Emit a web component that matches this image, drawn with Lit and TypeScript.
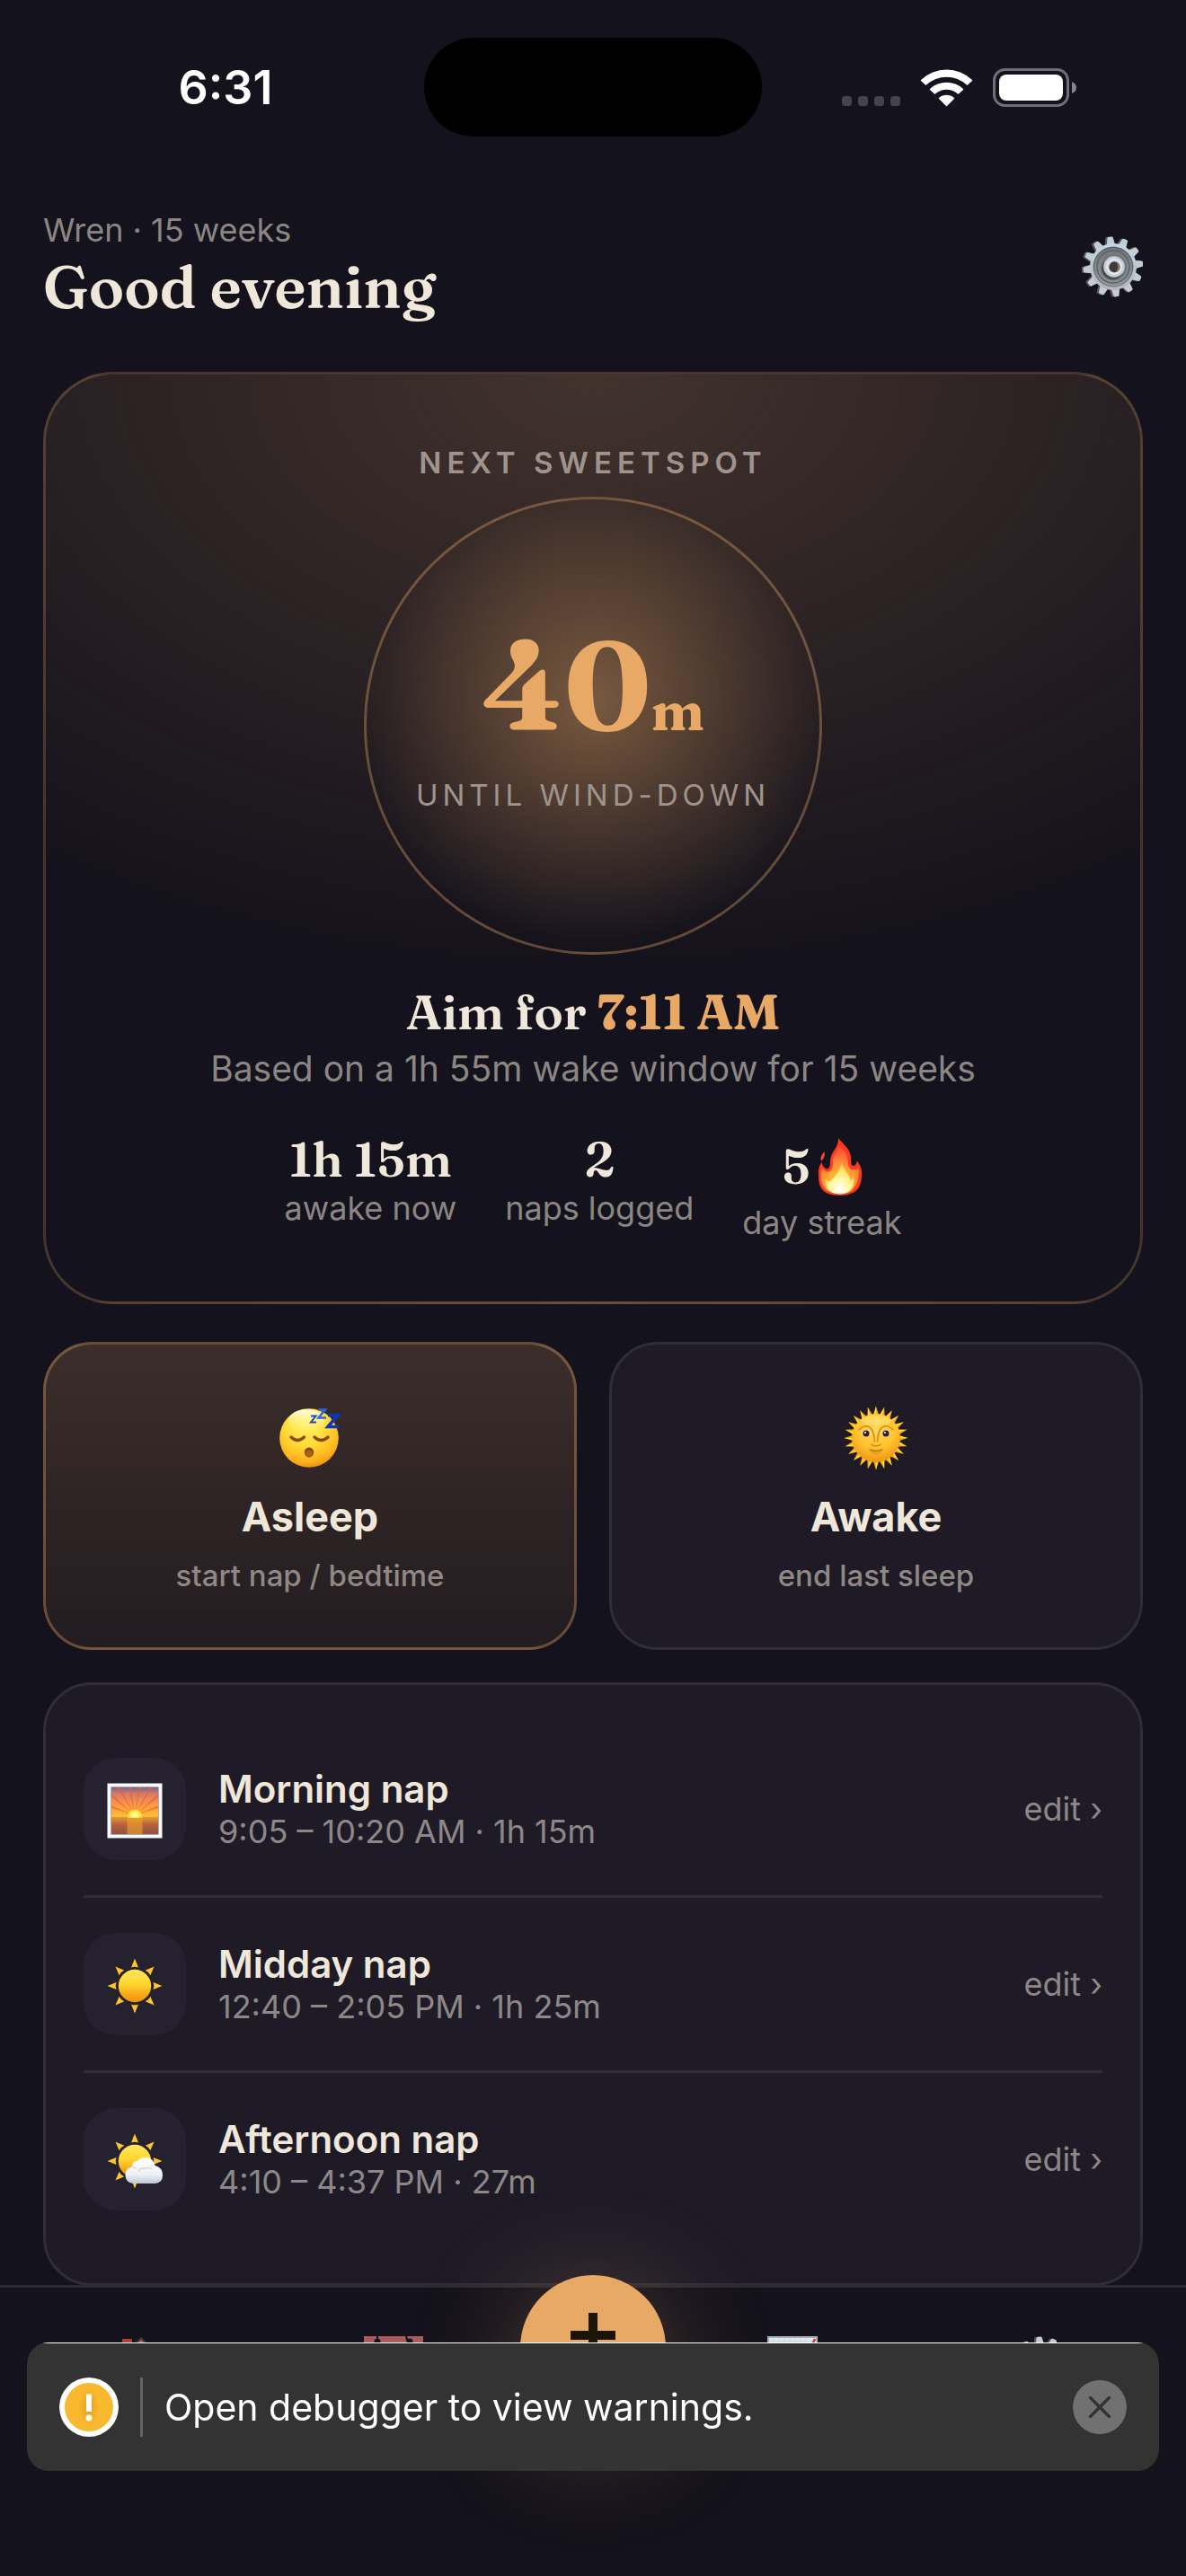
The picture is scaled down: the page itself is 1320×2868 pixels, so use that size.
import { LitElement, html, css, svg } from "lit";
import { customElement } from "lit/decorators.js";

const turns = (count: number, offset = 0) =>
  Array.from({ length: count }, (_, i) => offset + (i * 360) / count);

const gear = () => html`
  <svg class="gear" viewBox="0 0 68 68" aria-hidden="true">
    <defs>
      <linearGradient id="steel" x1="0" y1="0" x2="0" y2="1">
        <stop offset="0" stop-color="#c6d8e4" />
        <stop offset="0.55" stop-color="#bcc3cc" />
        <stop offset="1" stop-color="#b9b3bd" />
      </linearGradient>
      <linearGradient id="dish" x1="0" y1="0" x2="0" y2="1">
        <stop offset="0" stop-color="#6f777d" />
        <stop offset="1" stop-color="#8f979c" />
      </linearGradient>
    </defs>
    <g fill="#5d5650">
      ${turns(12, -6).map(
        (a) => svg`<path d="M27.5 14 L29.5 1.5 Q30 0.5 31 0.5 L35 0.5 Q36 0.5 36.5 1.5 L38.5 14 Z" transform="rotate(${a} 33 34)" />`
      )}
    </g>
    <g fill="#c2ccd6">
      ${turns(12, -6).map(
        (a) => svg`<path d="M29.5 14 L31.8 1.8 Q32.2 0.6 33.2 0.6 L36.8 0.6 Q37.8 0.6 38.2 1.8 L40.5 14 Z" transform="rotate(${a} 35 34)" />`
      )}
    </g>
    <circle cx="35" cy="34" r="26" fill="url(#steel)" />
    <circle cx="35" cy="34" r="22.4" fill="#59636a" />
    <circle cx="35" cy="34.4" r="21.4" fill="url(#dish)" />
    <circle cx="35" cy="34" r="18" fill="none" stroke="#5b6368" stroke-width="1.4" />
    <circle cx="35.4" cy="34.6" r="14.6" fill="#70777c" />
    <circle cx="34.4" cy="36" r="12.4" fill="#4f4c4c" />
    <circle cx="36" cy="34" r="11.8" fill="#c8ced6" />
    <circle cx="36" cy="34" r="8" fill="none" stroke="#e3e7ec" stroke-width="2" />
    <circle cx="36.4" cy="34.2" r="6" fill="#3d3a3c" />
    <path d="M38 28.4 A6 6 0 0 1 38 40 A9 9 0 0 0 38 28.4Z" fill="#8a7462" />
  </svg>
`;

const flame = html`
  <svg class="flame" viewBox="0 0 50 64" aria-hidden="true">
    <defs>
      <radialGradient id="fire" cx="0.5" cy="0.86" r="0.82">
        <stop offset="0" stop-color="#ffe14a" />
        <stop offset="0.42" stop-color="#ffac35" />
        <stop offset="0.72" stop-color="#ff7b38" />
        <stop offset="1" stop-color="#fb4a2e" />
      </radialGradient>
      <radialGradient id="core" cx="0.5" cy="0.85" r="0.8">
        <stop offset="0" stop-color="#ffffff" />
        <stop offset="0.4" stop-color="#fff9a8" />
        <stop offset="1" stop-color="#ffd23c" />
      </radialGradient>
    </defs>
    <path d="M23 0 C27 6 36 11 37 21 C37.4 26 37 30 39 31 C42 31 43.5 29 44 25.5 C48 31 50 37 49 43 C48.5 48 48.5 48 46 55 C42 61 34 64 25 64 C14 64 7 61 3.5 55 C1.5 51 1 47 1 42 C0.5 36 1.5 31 4.500 27 C5.500 31 7 33 10 34.500 C13 34.500 14 31 14 26 C14 15 24 11 23 0Z" fill="#fa3a22" />
    <path d="M23 9 C31 14 33 19 33.500 25 C34 31 35 35 40 35.500 C43 35.500 44 34 45 32 C47 40 45 49 41.500 54 C38 60 33 62 25 62 C16 62 9 59 6 53 C3 47 3 39 5 33.500 C8 37 10 38 12.500 37.500 C16.500 36 17 31 17 26 C17 19 23 16 23 9Z" fill="url(#fire)" />
    <path d="M27 27 C28 35 35 39 36 46 C37 48 39 46 40 44 C41 52 38 62 25 62.500 C12 62 8 54 9 46 C11 48 12 49 14 48 C19 44 24 38 27 27Z" fill="url(#core)" />
    <path d="M7.500 15 C5 18 2.500 21 4 25.500 C6.500 24 8.500 20 7.500 15Z" fill="#fb4630" />
  </svg>
`;

const asleepFace = html`
  <svg class="face" viewBox="0 0 72 72" aria-hidden="true">
    <defs>
      <radialGradient id="skin" cx="0.45" cy="0.25" r="0.78">
        <stop offset="0" stop-color="#fff36a" />
        <stop offset="0.5" stop-color="#ffd935" />
        <stop offset="0.84" stop-color="#feb01c" />
        <stop offset="1" stop-color="#e88a0c" />
      </radialGradient>
      <linearGradient id="shine" x1="0" y1="0" x2="0" y2="1">
        <stop offset="0" stop-color="#fffef0" stop-opacity="0.95" />
        <stop offset="1" stop-color="#fff36a" stop-opacity="0" />
      </linearGradient>
    </defs>
    <circle cx="35" cy="36" r="32.800" fill="url(#skin)" />
    <ellipse cx="32" cy="17" rx="20" ry="13" fill="url(#shine)" />
    <g fill="none" stroke="#8a4a06" stroke-width="3.400" stroke-linecap="round">
      <path d="M15 35 Q22 42 29.500 35" />
      <path d="M41 35 Q48.500 42 56 35" />
    </g>
    <ellipse cx="35" cy="52" rx="5.200" ry="5.400" fill="#7f4304" />
    <ellipse cx="35" cy="53" rx="3.600" ry="3.600" fill="#a8650c" />
    <g fill="none" stroke-linejoin="miter">
      <path d="M37 11.500 H42.500 L37 18.500 H43" stroke="#1d46cc" stroke-width="2" />
      <path d="M45.500 4.500 H53 L45.500 13.500 H54" stroke="#3567dd" stroke-width="2.600" />
      <path d="M56 10.500 H67 L56 23.500 H68" stroke="#0f34c0" stroke-width="3.600" />
    </g>
  </svg>
`;

const sunFace = html`
  <svg class="face" viewBox="0 0 72 72" aria-hidden="true">
    <defs>
      <radialGradient id="disc" cx="0.5" cy="0.3" r="0.7">
        <stop offset="0" stop-color="#ffd85a" />
        <stop offset="0.6" stop-color="#ffc32e" />
        <stop offset="1" stop-color="#ef9412" />
      </radialGradient>
    </defs>
    ${turns(24).map(
      (a) => svg`
        <path d="M32.400 12 L36 0.500 L39.600 12Z" fill="#f6a722" transform="rotate(${a} 36 36)" />
        <path d="M36 0.500 L36 12 L33.400 12Z" fill="#ffe838" transform="rotate(${a} 36 36)" />`
    )}
    <circle cx="36" cy="36" r="27" fill="url(#disc)" />
    <ellipse cx="36" cy="16.500" rx="17" ry="5" fill="#ffe486" opacity="0.5" />
    <g fill="none" stroke="#d48a12" stroke-width="1.500" stroke-linecap="round">
      <path d="M17 27 Q25 19 31 26 Q34 31 34.500 40" />
      <path d="M55 27 Q47 19 41 26 Q38 31 37.500 40" />
      <path d="M31 43 Q33 45.500 36 44.500 Q39 45.500 41 43" />
    </g>
    <ellipse cx="25" cy="31" rx="5" ry="3.800" fill="#f6dfc0" />
    <ellipse cx="47" cy="31" rx="5" ry="3.800" fill="#f6dfc0" />
    <circle cx="25" cy="31" r="3.600" fill="#34202c" />
    <circle cx="47" cy="31" r="3.600" fill="#34202c" />
    <circle cx="24" cy="30" r="1" fill="#ffffff" />
    <circle cx="46" cy="30" r="1" fill="#ffffff" />
    <path d="M27.500 47.500 Q36 51 44.500 47.500 Q41 55 36 55 Q31 55 27.500 47.500Z" fill="#e8a020" />
    <path d="M29 49 Q36 51.500 43 49" fill="none" stroke="#c67c10" stroke-width="1.400" />
  </svg>
`;

const sunrise = html`
  <svg class="weather" viewBox="0 0 62 62" aria-hidden="true">
    <defs>
      <linearGradient id="dawn" x1="0" y1="0" x2="0" y2="1">
        <stop offset="0" stop-color="#76668f" />
        <stop offset="0.22" stop-color="#d97a66" />
        <stop offset="0.6" stop-color="#fd9a42" />
        <stop offset="1" stop-color="#fdbb33" />
      </linearGradient>
      <linearGradient id="sea" x1="0" y1="0" x2="0" y2="1">
        <stop offset="0" stop-color="#e59a2d" />
        <stop offset="0.4" stop-color="#b9653e" />
        <stop offset="1" stop-color="#94503f" />
      </linearGradient>
      <clipPath id="sky"><rect x="5" y="5" width="52" height="33" /></clipPath>
    </defs>
    <rect x="0.500" y="0.500" width="61" height="61" fill="#f6fafa" />
    <rect x="4.500" y="4.500" width="53" height="53" fill="#6d5a78" />
    <rect x="5" y="5" width="52" height="33" fill="url(#dawn)" />
    <g clip-path="url(#sky)" fill="#e7603f" opacity="0.7">
      ${turns(18, 10).map((a) => svg`<path d="M31 36 L29.200 -12 L32.800 -12Z" transform="rotate(${a} 31 36)" />`)}
    </g>
    <path d="M5 35 Q14 32 20 35 L42 35 Q48 32 57 35 V40 H5Z" fill="#fdbb33" />
    <rect x="5" y="38" width="52" height="19" fill="url(#sea)" />
    <rect x="22.500" y="38" width="17" height="19" fill="#f0a52c" opacity="0.6" />
    <path d="M22.500 38.500 A8.500 9 0 0 1 39.500 38.500Z" fill="#ffe53d" />
    <path d="M26 38.500 A5 6 0 0 1 36 38.500Z" fill="#fff993" />
  </svg>
`;

const sunShape = () => svg`
  <defs>
    <linearGradient id="sunfill" x1="0" y1="0" x2="0" y2="1">
      <stop offset="0" stop-color="#ffe65c" />
      <stop offset="0.45" stop-color="#ffd630" />
      <stop offset="0.8" stop-color="#f5a315" />
      <stop offset="1" stop-color="#ee9411" />
    </linearGradient>
  </defs>
  ${turns(8).map(
    (a) => svg`<path d="M27 10.500 L31 0.500 L35 10.500 Q31 8.800 27 10.500Z" fill="#ffc52d" transform="rotate(${a} 31 31)" />`
  )}
  <circle cx="31" cy="31" r="18.200" fill="url(#sunfill)" />
`;

const sun = html`<svg class="weather" viewBox="0 0 62 62" aria-hidden="true">${sunShape()}</svg>`;

const sunCloud = html`
  <svg class="weather" viewBox="0 0 62 62" aria-hidden="true">
    ${sunShape()}
    <defs>
      <linearGradient id="cloud" x1="0" y1="0" x2="0" y2="1">
        <stop offset="0" stop-color="#ffffff" />
        <stop offset="0.65" stop-color="#eef1f5" />
        <stop offset="1" stop-color="#bccad6" />
      </linearGradient>
    </defs>
    <path d="M29 56 Q20.500 55 20.500 46.500 Q20.500 38.500 28 37.500 Q28 31 34 31 Q37 27 43 27 Q52 27.500 53.500 36 Q62 38 62 47 Q62 55 54 56Z" fill="url(#cloud)" />
    <path d="M28 37.500 Q31 37.500 33 40 M35 43 Q37 38.500 42 39.500 Q46 37 50 40" fill="none" stroke="#d3d9e0" stroke-width="1.400" />
  </svg>
`;

const house = html`
  <svg class="tab-icon" viewBox="0 0 66 66" aria-hidden="true">
    <rect x="8" y="3" width="11" height="24" fill="#b83d31" />
    <path d="M29 1 L0 30 H59Z" fill="#3a3f3e" />
    <path d="M29 4 L4 29 V62 H54 V29Z" fill="#d9573f" />
  </svg>
`;

const calendar = html`
  <svg class="tab-icon dimmed" viewBox="0 0 66 66" aria-hidden="true">
    <rect x="0" y="0" width="66" height="64" fill="#e6e9ec" />
    <path d="M0 0 H66 V18 H0Z" fill="#e57777" />
    <circle cx="15" cy="6" r="3.500" fill="#14121c" />
    <circle cx="51" cy="6" r="3.500" fill="#14121c" />
    <path d="M14 0 H16 V5 H14Z M46 0 H48 L50 5 H47Z" fill="#14121c" />
  </svg>
`;

const chart = html`
  <svg class="tab-icon" viewBox="0 0 66 66" aria-hidden="true">
    <rect x="5" y="0" width="56" height="60" fill="#a9afb5" />
    <rect x="7" y="2" width="52" height="56" fill="#e2e8ee" />
    <path d="M7 5.500 H59 M7 12 H59 M12 2 V58 M18 2 V58 M24 2 V58 M30 2 V58 M36 2 V58 M42 2 V58 M48 2 V58" stroke="#c2d9ea" stroke-width="1" />
    <path d="M8 52 L30 34 L40 40 L58 3" fill="none" stroke="#cf3543" stroke-width="2.500" />
  </svg>
`;

const naps = [
  { icon: sunrise, name: "Morning nap", detail: "9:05 – 10:20 AM · 1h 15m" },
  { icon: sun, name: "Midday nap", detail: "12:40 – 2:05 PM · 1h 25m" },
  { icon: sunCloud, name: "Afternoon nap", detail: "4:10 – 4:37 PM · 27m" },
];

@customElement("app-root")
export class AppRoot extends LitElement {
  static styles = css`
    :host {
      --bg: #14121c;
      --card: #1e1b27;
      --line: #302d39;
      --cream: #f0e7db;
      --muted: #8b8683;
      --amber: #e8a866;
      --serif: Fraunces, "Liberation Serif", serif;
      display: block;
      min-height: 100vh;
      background: var(--bg);
      color: var(--cream);
      font-family: Inter, "Liberation Sans", sans-serif;
      font-size: 36px;
      line-height: 44px;
    }
    * { box-sizing: border-box; }
    h1, h2, p, ul { margin: 0; padding: 0; }
    button {
      margin: 0;
      padding: 0;
      border: 0;
      background: none;
      color: inherit;
      font: inherit;
    }
    svg { display: block; flex: none; }

    .status {
      display: grid;
      grid-template-columns: 1fr 376px 1fr;
      align-items: center;
      padding-top: 42px;
      color: #ffffff;
    }
    .time {
      padding: 2px 0 0 30px;
      text-align: center;
      font-size: 52px;
      font-weight: 600;
    }
    .island { height: 110px; border-radius: 55px; background: #000000; }
    .radios { display: flex; justify-content: center; padding: 2px 32px 0 0; }
    .radios svg { width: 262px; height: 44px; }

    .page {
      display: flex;
      flex-direction: column;
      padding: 82px 48px 324px;
    }
    .header {
      display: flex;
      align-items: center;
      justify-content: space-between;
      margin-bottom: 54px;
    }
    .baby { color: var(--muted); }
    .greeting {
      font: 600 66px/82px var(--serif);
    }
    .gear { width: 68px; height: 68px; }

    .hero {
      display: flex;
      flex-direction: column;
      align-items: center;
      padding: 78px 42px 66px;
      border: 3px solid rgba(232, 168, 102, 0.24);
      border-radius: 78px;
      background-image: radial-gradient(ellipse 88% 66% at 50% 0%, rgba(232, 168, 102, 0.22), rgba(232, 168, 102, 0));
    }
    .eyebrow {
      color: #9f948d;
      font-size: 33px;
      font-weight: 600;
      line-height: 40px;
      letter-spacing: 6px;
    }
    .dial {
      display: flex;
      flex-direction: column;
      align-items: center;
      justify-content: center;
      width: 510px;
      height: 510px;
      margin-top: 18px;
      border: 3px solid rgba(232, 168, 102, 0.36);
      border-radius: 50%;
      background-image: radial-gradient(circle at 50% 45%, rgba(232, 168, 102, 0.42), rgba(20, 18, 28, 0.25) 72%);
    }
    .count {
      color: var(--amber);
      font: 700 138px/104px var(--serif);
    }
    .unit { font-size: 60px; }
    .until {
      margin-top: 22px;
      color: #9f948d;
      font-size: 33px;
      line-height: 40px;
      letter-spacing: 5px;
    }
    .aim {
      margin-top: 32px;
      font: 600 54px/64px var(--serif);
    }
    .aim-time { color: var(--amber); font-weight: 700; }
    .basis {
      margin-top: 7px;
      color: var(--muted);
      font-size: 39px;
      line-height: 48px;
    }
    .stats { display: flex; gap: 54px; margin-top: 45px; }
    .stat { display: flex; flex-direction: column; align-items: center; color: var(--muted); }
    .value {
      display: flex;
      align-items: center;
      gap: 8px;
      color: var(--cream);
      font: 600 54px/64px var(--serif);
    }
    .streak { line-height: 80px; }
    .flame { width: 50px; height: 64px; }

    .actions {
      display: grid;
      grid-template-columns: 1fr 1fr;
      gap: 36px;
      margin-top: 42px;
    }
    .action {
      display: flex;
      flex-direction: column;
      align-items: center;
      gap: 18px;
      padding: 60px 24px;
      border: 3px solid var(--line);
      border-radius: 54px;
      background-color: var(--card);
    }
    .action.active {
      border-color: rgba(232, 168, 102, 0.34);
      background-color: transparent;
      background-image: linear-gradient(rgba(232, 168, 102, 0.19), rgba(232, 168, 102, 0.07));
    }
    .art { display: flex; align-items: center; height: 87px; }
    .face { width: 72px; height: 72px; }
    .action-name { font-size: 45px; font-weight: 700; line-height: 54px; }
    .action-hint { color: #8f8884; font-size: 33px; font-weight: 500; line-height: 40px; }

    .naps {
      margin-top: 36px;
      padding: 42px;
      border: 3px solid var(--line);
      border-radius: 54px;
      background: var(--card);
      list-style: none;
    }
    .nap {
      display: flex;
      align-items: center;
      gap: 36px;
      padding: 39px 0;
    }
    .nap + .nap { border-top: 3px solid var(--line); }
    .tile {
      display: flex;
      align-items: center;
      justify-content: center;
      width: 114px;
      height: 114px;
      border-radius: 36px;
      background: #25212e;
    }
    .weather { width: 62px; height: 62px; margin-top: 4px; }
    .nap-text { flex: 1; }
    .nap-name { font-size: 42px; font-weight: 600; line-height: 50px; }
    .nap-detail, .edit { color: #8d8887; }

    .tabs {
      position: fixed;
      right: 0;
      bottom: 0;
      left: 0;
      display: grid;
      grid-template-columns: 32fr 23fr 21fr 23fr 32fr;
      justify-items: center;
      align-items: start;
      height: 324px;
      border-top: 3px solid #2b292e;
      background: var(--bg);
    }
    .tab { padding-top: 54px; }
    .tab-icon { width: 66px; height: 66px; }
    .dimmed { opacity: 0.72; }
    .add {
      display: flex;
      justify-content: center;
      width: 162px;
      height: 162px;
      margin-top: -14px;
      padding-top: 42px;
      border-radius: 50%;
      background: var(--amber);
      box-shadow: 0 24px 120px rgba(232, 168, 102, 0.36);
    }
    .plus { width: 50px; height: 50px; }

    .toast {
      position: fixed;
      right: 30px;
      bottom: 117px;
      left: 30px;
      display: flex;
      align-items: center;
      gap: 24px;
      height: 143px;
      padding: 0 36px;
      border-radius: 24px;
      background: #333333 linear-gradient(#ffffff, #ffffff) top / 100% 1px no-repeat;
      color: #ffffff;
    }
    .warn { width: 66px; height: 66px; }
    .rule { width: 3px; height: 66px; background: #666666; }
    .message { flex: 1; font-size: 41px; line-height: 50px; }
    .dismiss svg { width: 60px; height: 60px; }
  `;

  render() {
    return html`
      <div class="status">
        <div class="time">6:31</div>
        <div class="island"></div>
        <div class="radios">
          <svg viewBox="0 0 262 44" aria-hidden="true">
            <g fill="#45434d">
              <rect x="0" y="31" width="11" height="11" rx="3.500" />
              <rect x="18" y="31" width="11" height="11" rx="3.500" />
              <rect x="36" y="31" width="11" height="11" rx="3.500" />
              <rect x="54" y="31" width="11" height="11" rx="3.500" />
            </g>
            <g fill="#ffffff">
              <path d="M88 13 A41 41 0 0 1 145 13 Q145.500 13.500 145 14 L140 18.500 Q139.500 19 139 18.500 A33 33 0 0 0 94 18.500 Q93.500 19 93 18.500 L88 14 Q87.500 13.500 88 13Z" />
              <path d="M98 23 A27 27 0 0 1 135 23 Q135.500 23.500 135 24 L130 28.500 Q129.500 29 129 28.500 A18.500 18.500 0 0 0 104 28.500 Q103.500 29 103 28.500 L98 24 Q97.500 23.500 98 23Z" />
              <path d="M108 33 A13 13 0 0 1 125 33 Q125.500 33.500 125 34 L117 42 Q116.500 42.500 116 42 L108 34 Q107.500 33.500 108 33Z" />
            </g>
            <rect x="169.500" y="1.500" width="82" height="40" rx="12" fill="none" stroke="#706f75" stroke-width="3" />
            <rect x="175" y="7" width="71" height="29" rx="8" fill="#ffffff" />
            <path d="M256 15 Q261 17 261 21.500 Q261 26 256 28Z" fill="#87868c" />
          </svg>
        </div>
      </div>

      <main class="page">
        <header class="header">
          <div>
            <p class="baby">Wren · 15 weeks</p>
            <h1 class="greeting">Good evening</h1>
          </div>
          <button type="button" aria-label="Settings">${gear()}</button>
        </header>

        <section class="hero">
          <p class="eyebrow">NEXT SWEETSPOT</p>
          <div class="dial">
            <div class="count">40<span class="unit">m</span></div>
            <p class="until">UNTIL WIND-DOWN</p>
          </div>
          <h2 class="aim">Aim for <span class="aim-time">7:11 AM</span></h2>
          <p class="basis">Based on a 1h 55m wake window for 15 weeks</p>
          <div class="stats">
            <div class="stat"><span class="value">1h 15m</span>awake now</div>
            <div class="stat"><span class="value">2</span>naps logged</div>
            <div class="stat"><span class="value streak">5${flame}</span>day streak</div>
          </div>
        </section>

        <section class="actions">
          <button type="button" class="action active">
            <span class="art">${asleepFace}</span>
            <span class="action-name">Asleep</span>
            <span class="action-hint">start nap / bedtime</span>
          </button>
          <button type="button" class="action">
            <span class="art">${sunFace}</span>
            <span class="action-name">Awake</span>
            <span class="action-hint">end last sleep</span>
          </button>
        </section>

        <ul class="naps">
          ${naps.map(
            (nap) => html`
              <li class="nap">
                <span class="tile">${nap.icon}</span>
                <div class="nap-text">
                  <p class="nap-name">${nap.name}</p>
                  <p class="nap-detail">${nap.detail}</p>
                </div>
                <button type="button" class="edit">edit ›</button>
              </li>
            `
          )}
        </ul>
      </main>

      <nav class="tabs">
        <button type="button" class="tab" aria-label="Home">${house}</button>
        <button type="button" class="tab" aria-label="Calendar">${calendar}</button>
        <button type="button" class="add" aria-label="Add">
          <svg class="plus" viewBox="0 0 50 50" aria-hidden="true">
            <path d="M25 0 V50 M0 25 H50" stroke="#1d1408" stroke-width="10" />
          </svg>
        </button>
        <button type="button" class="tab" aria-label="Trends">${chart}</button>
        <button type="button" class="tab" aria-label="More">${gear()}</button>
      </nav>

      <div class="toast" role="status">
        <svg class="warn" viewBox="0 0 66 66" aria-hidden="true">
          <defs>
            <radialGradient id="halo">
              <stop offset="0" stop-color="#e39f1c" />
              <stop offset="1" stop-color="#f9b92f" />
            </radialGradient>
          </defs>
          <circle cx="33" cy="33" r="33" fill="#ffffff" />
          <circle cx="33" cy="33" r="27" fill="#f9b92f" />
          <ellipse cx="33" cy="33" rx="12" ry="20" fill="url(#halo)" />
          <path d="M30 18.500 H36 V38 H30Z" fill="#ffffff" />
          <circle cx="33" cy="45" r="3.400" fill="#ffffff" />
        </svg>
        <span class="rule"></span>
        <span class="message">Open debugger to view warnings.</span>
        <button type="button" class="dismiss" aria-label="Dismiss">
          <svg viewBox="0 0 60 60" aria-hidden="true">
            <circle cx="30" cy="30" r="30" fill="#717171" />
            <path d="M19.500 19.500 L40.500 40.500 M40.500 19.500 L19.500 40.500" stroke="#333333" stroke-width="3.400" stroke-linecap="round" />
          </svg>
        </button>
      </div>
    `;
  }
}
